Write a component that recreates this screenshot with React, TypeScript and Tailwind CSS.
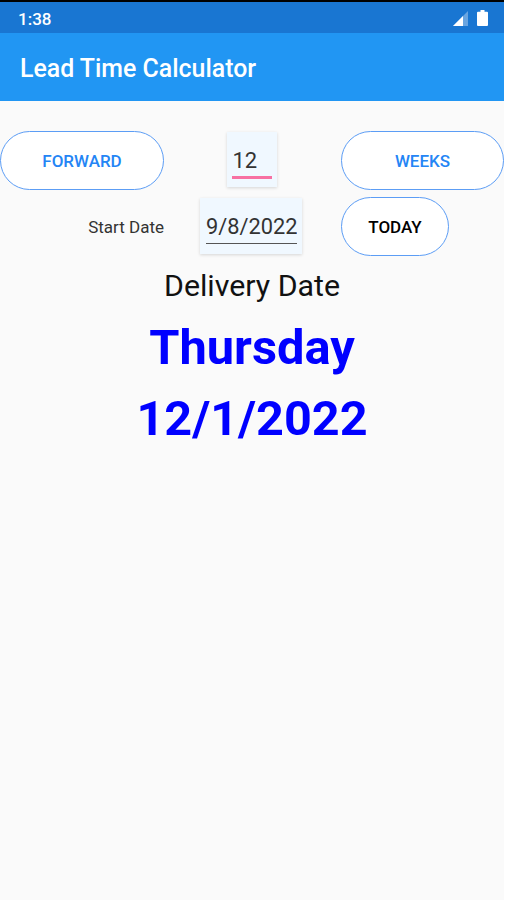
import { useState } from "react";
import clsx from "clsx";

type Unit = "DAYS" | "WEEKS";
type Direction = "FORWARD" | "BACKWARD";

const DAY_NAMES = ["Sunday", "Monday", "Tuesday", "Wednesday", "Thursday", "Friday", "Saturday"];

const parseDate = (value: string): Date => {
  const [month, day, year] = value.split("/").map(Number);
  return new Date(year, month - 1, day);
};

const formatDate = (date: Date) => `${date.getMonth() + 1}/${date.getDate()}/${date.getFullYear()}`;

function StatusBar() {
  return (
    <div className="flex h-[33px] items-center justify-between border-t-2 border-black bg-[#1976d2] pl-[18px] pr-[16px]">
      <span className="pt-[3px] text-[17px] leading-none font-medium text-white">1:38</span>
      <div className="flex items-end gap-[9px]">
        <svg width="15" height="15" viewBox="0 0 15 15">
          <path d="M15 0V15H0Z" fill="#fff" fillOpacity="0.35" />
          <path d="M10 5V15H0Z" fill="#fff" />
        </svg>
        <svg width="11" height="16" viewBox="0 0 11 16">
          <path d="M3.5 0h4v1.8H10a1 1 0 0 1 1 1V15a1 1 0 0 1-1 1H1a1 1 0 0 1-1-1V2.800a1 1 0 0 1 1-1h2.500z" fill="#fff" />
        </svg>
      </div>
    </div>
  );
}

interface PillButtonProps {
  label: string;
  onClick: () => void;
  className?: string;
}

function PillButton({ label, onClick, className }: PillButtonProps) {
  return (
    <button
      onClick={onClick}
      className={clsx(
        "h-[59px] rounded-full border border-[#5c9df5] bg-white pt-[2px] text-[17px] font-medium",
        className
      )}
    >
      {label}
    </button>
  );
}

export default function App() {
  const [direction, setDirection] = useState<Direction>("FORWARD");
  const [unit, setUnit] = useState<Unit>("WEEKS");
  const [amount, setAmount] = useState("12");
  const [startDate, setStartDate] = useState("9/8/2022");

  const delivery = parseDate(startDate);
  const days = Number(amount) * (unit === "WEEKS" ? 7 : 1);
  delivery.setDate(delivery.getDate() + (direction === "FORWARD" ? days : -days));

  return (
    <div className="min-h-screen bg-white font-[Roboto,sans-serif]">
      <div className="min-h-screen w-[504px] bg-[#fafafa]">
        <StatusBar />
        <header className="flex h-[68px] items-center bg-[#2196f3] pt-[4px] pl-[20px]">
          <h1 className="text-[24.9px] leading-none font-medium text-white">Lead Time Calculator</h1>
        </header>

        <main className="pt-[30px]">
          <div className="grid grid-cols-[164px_177px_163px] gap-y-[7px]">
            <PillButton
              label={direction}
              onClick={() => setDirection(direction === "FORWARD" ? "BACKWARD" : "FORWARD")}
              className="w-[164px] text-[#2485f5]"
            />
            <div className="flex justify-center pt-[1px] pr-[2px]">
              <div className="h-[55px] w-[50px] bg-[#f0f8ff] px-[5px] pt-[12px] shadow-[0_1px_3px_rgba(0,0,0,0.15)]">
                <input
                  value={amount}
                  onChange={(e) => setAmount(e.target.value)}
                  className="block h-[35px] w-[40px] border-b-3 border-[#f771a3] pl-[1px] text-[22px] text-[#333] outline-none"
                />
              </div>
            </div>
            <PillButton
              label={unit}
              onClick={() => setUnit(unit === "WEEKS" ? "DAYS" : "WEEKS")}
              className="w-[163px] text-[#2485f5]"
            />

            <div className="flex items-center justify-end pt-[2px] text-[17px] text-[#333]">Start Date</div>
            <div className="flex justify-center pt-[1px] pr-[3px]">
              <div className="h-[56px] w-[102px] bg-[#f0f8ff] px-[6px] pt-[12px] shadow-[0_1px_3px_rgba(0,0,0,0.15)]">
                <input
                  value={startDate}
                  onChange={(e) => setStartDate(e.target.value)}
                  className="block h-[34px] w-[91px] border-b border-[#555] text-[21.8px] text-[#333] outline-none"
                />
              </div>
            </div>
            <PillButton
              label="TODAY"
              onClick={() => setStartDate(formatDate(new Date()))}
              className="w-[108px] text-black"
            />
          </div>

          <section className="flex flex-col items-center">
            <p className="mt-[12px] text-[30.3px] leading-[36px] text-[#111]">Delivery Date</p>
            <p className="mt-[15px] text-[48.8px] leading-[58px] font-bold text-[#0000ff]">
              {DAY_NAMES[delivery.getDay()]}
            </p>
            <p className="mt-[13px] text-[48.6px] leading-[58px] font-bold text-[#0000ff]">
              {formatDate(delivery)}
            </p>
          </section>
        </main>
      </div>
    </div>
  );
}
